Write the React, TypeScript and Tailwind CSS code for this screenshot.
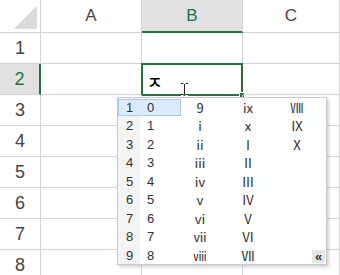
import React from "react";

const cols = ["A", "B", "C"];
const rows = [1, 2, 3, 4, 5, 6, 7, 8];

const list = [
  ["0", "9", "ⅸ", "Ⅷ"],
  ["1", "ⅰ", "ⅹ", "Ⅸ"],
  ["2", "ⅱ", "Ⅰ", "Ⅹ"],
  ["3", "ⅲ", "Ⅱ", ""],
  ["4", "ⅳ", "Ⅲ", ""],
  ["5", "ⅴ", "Ⅳ", ""],
  ["6", "ⅵ", "Ⅴ", ""],
  ["7", "ⅶ", "Ⅵ", ""],
  ["8", "ⅷ", "Ⅶ", ""],
];

function Candidates() {
  return (
    <div className="absolute left-[117px] top-[97px] w-[210px] h-[168px] bg-white border border-[#c9c9c9] shadow-[2px_2px_3px_rgba(0,0,0,0.18)] text-[13px] text-[#333] [font-family:'Liberation_Sans','Noto_Sans_CJK_KR',sans-serif]">
      <div className="absolute left-0 top-0 bottom-0 w-[22px] bg-[#f4f4f4]" />
      <div className="relative flex flex-col">
        {list.map((r, i) => (
          <div key={i} className="flex items-center h-[18.5px]">
            <div
              className={
                "flex items-center w-[63px] h-[17px] border " +
                (i === 0 ? "bg-[#dcebfb] border-[#a8c8ec]" : "border-transparent")
              }
            >
              <span className="w-[21px] text-center">{i + 1}</span>
              <span className="pl-[7px]">{r[0]}</span>
            </div>
            <span className="w-[38px] text-center [font-family:'Noto_Sans_CJK_KR',sans-serif] text-[13px]">{r[1]}</span>
            <span className="w-[58px] text-center [font-family:'Noto_Sans_CJK_KR',sans-serif] text-[13px]">{r[2]}</span>
            <span className="w-[40px] text-center [font-family:'Noto_Sans_CJK_KR',sans-serif] text-[13px]">{r[3]}</span>
          </div>
        ))}
      </div>
      <div className="absolute right-[1px] bottom-[1px] w-[13px] h-[13px] bg-[#e6e6e6] flex items-center justify-center text-[13px] font-bold leading-none text-[#333]">
        «
      </div>
    </div>
  );
}

export default function App() {
  return (
    <div className="relative w-[340px] h-[275px] overflow-hidden bg-white [font-family:'Liberation_Sans',sans-serif]">
      <div className="grid grid-cols-[41px_101px_101px_97px] grid-rows-[33px_repeat(8,31px)]">
        <div className="border-r border-b border-[#d4d4d4] flex items-end justify-end pr-[3px] pb-[3px]">
          <svg width="23" height="23" viewBox="0 0 23 23">
            <polygon points="23,0 23,23 0,23" fill="#dadada" />
          </svg>
        </div>
        {cols.map((c) => (
          <div
            key={c}
            className={
              "flex items-center justify-center text-[17px] " +
              (c === "B"
                ? "bg-[#e1e1e1] text-[#217346] border-b-2 border-r border-[#217346] border-r-[#d4d4d4]"
                : "text-[#444] border-r border-b border-[#d4d4d4]")
            }
          >
            {c}
          </div>
        ))}
        {rows.map((r) => (
          <React.Fragment key={r}>
            <div
              className={
                "flex items-center justify-center text-[18px] " +
                (r === 2
                  ? "bg-[#e1e1e1] text-[#217346] border-r-2 border-b border-[#217346] border-b-[#d4d4d4]"
                  : "text-[#444] border-r border-b border-[#d4d4d4]")
              }
            >
              {r}
            </div>
            {cols.map((c) => (
              <div key={c} className="relative border-r border-b border-[#d4d4d4]">
                {r === 2 && c === "B" && (
                  <div className="absolute -left-[1px] -top-[1px] w-[102px] h-[33px] border-2 border-[#217346] flex items-end pl-[4px] pb-[4px]">
                    <span className="text-[17px] font-medium leading-none text-black [font-family:'Noto_Sans_CJK_KR',sans-serif]">ㅈ</span>
                    <div className="absolute -right-[4px] -bottom-[4px] w-[6px] h-[6px] bg-[#217346] border border-white" />
                  </div>
                )}
              </div>
            ))}
          </React.Fragment>
        ))}
      </div>
      <svg className="absolute left-[180px] top-[82px]" width="9" height="14" viewBox="0 0 9 14">
        <path d="M1 1.5h2.5M5.5 1.5H8M4.5 2v10M1 12.5h2.5M5.5 12.5H8" stroke="#fff" strokeWidth="3" fill="none" />
        <path d="M1 1.5h2.5M5.5 1.5H8M4.5 2v10M1 12.5h2.5M5.5 12.5H8" stroke="#222" strokeWidth="1" fill="none" />
      </svg>
      <Candidates />
    </div>
  );
}
